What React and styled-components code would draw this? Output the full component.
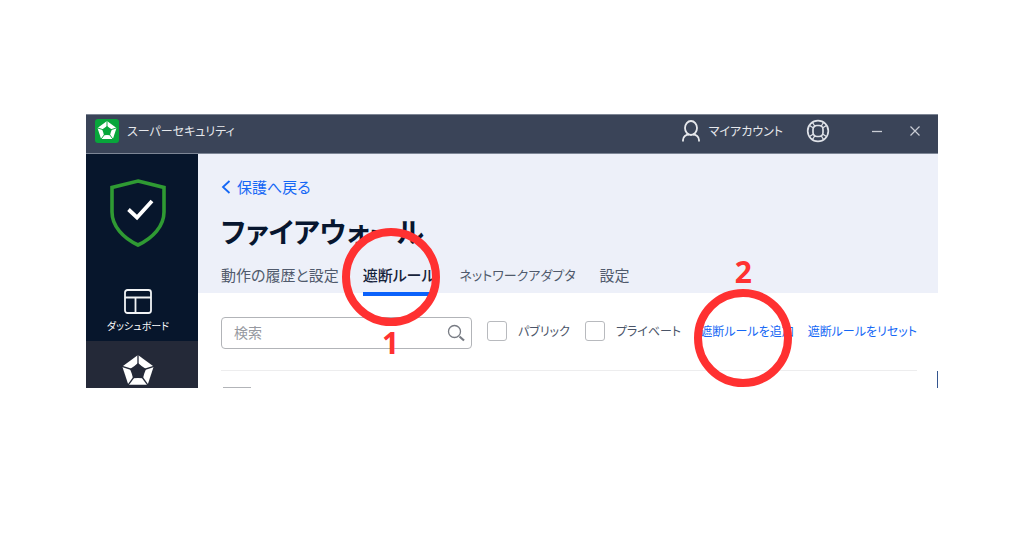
import React from "react";
import styled, { createGlobalStyle } from "styled-components";

const GlobalStyle = createGlobalStyle`
  *, *::before, *::after { box-sizing: border-box; }
  body {
    margin: 0;
    background: #fff;
    color: #4a5468;
    font-family: "Noto Sans CJK JP", sans-serif;
    font-feature-settings: "palt";
  }
  button, input { font: inherit; font-feature-settings: inherit; color: inherit; }
`;

const Page = styled.div`
  padding: 114px 86px;
`;

const Window = styled.div`
  display: flex;
  flex-direction: column;
  overflow: clip;
`;

const TitleBar = styled.header`
  display: flex;
  align-items: center;
  height: 40px;
  padding: 0 8px 6px 9px;
  border-top: 1px solid #7d8594;
  border-bottom: 1px solid #7d8696;
  background: #3a4458;
  color: #e6e8ec;
  font-size: 12px;
  line-height: 20px;
`;

const Brand = styled.div`
  display: flex;
  align-items: center;
  gap: 8px;
  margin-right: auto;
`;

const BarButton = styled.button`
  display: flex;
  align-items: center;
  justify-content: center;
  gap: 8px;
  height: 30px;
  min-width: ${(p) => p.$width || "auto"};
  margin-right: ${(p) => p.$after || "0"};
  padding: 0;
  border: 0;
  background: none;
`;

const Body = styled.div`
  display: flex;
`;

const Sidebar = styled.nav`
  display: flex;
  flex-direction: column;
  flex: none;
  width: 112px;
  background: #07162c;
  color: #fff;
`;

const Status = styled.div`
  display: flex;
  justify-content: center;
  height: 127px;
  padding: 24px 8px 0 0;
`;

const NavItem = styled.a`
  display: flex;
  flex-direction: column;
  align-items: center;
  gap: 3px;
  height: ${(p) => (p.$active ? "47px" : "60px")};
  padding: ${(p) => (p.$active ? "14px" : "8px")} 8px 0 0;
  overflow: hidden;
  background: ${(p) => (p.$active ? "#242938" : "transparent")};
  color: inherit;
  font-size: 10px;
  line-height: 18px;
  text-decoration: none;
`;

const Main = styled.main`
  display: flex;
  flex-direction: column;
  flex: 1;
  min-width: 0;
`;

const Heading = styled.div`
  height: 139px;
  padding: 22px 23px 0;
  background: #edf0f9;
`;

const BackLink = styled.a`
  display: inline-flex;
  align-items: center;
  gap: 6px;
  color: #1467f5;
  font-size: 15px;
  line-height: 22px;
  text-decoration: none;
  vertical-align: top;
`;

const Title = styled.h1`
  margin: 9px 0 13px;
  color: #07162f;
  font-size: 28px;
  font-weight: 700;
  line-height: 44px;
`;

const Tabs = styled.div`
  display: flex;
  gap: 24px;
`;

const Tab = styled.button`
  position: relative;
  height: 30px;
  padding: 0 0 8px;
  border: 0;
  border-bottom: 4px solid ${(p) => (p.$active ? "#0b62fb" : "transparent")};
  background: none;
  color: ${(p) => (p.$active ? "#16233b" : "#505a6c")};
  font-size: ${(p) => (p.$compact ? "13px" : "15px")};
  font-weight: ${(p) => (p.$active ? 500 : 400)};
  line-height: 18px;
  white-space: nowrap;
`;

const Content = styled.div`
  flex: 1;
  padding: 24px 21px 0 23px;
`;

const Toolbar = styled.div`
  display: flex;
  align-items: center;
  gap: 15px;
  padding-bottom: 21px;
  border-bottom: 1px solid #ededee;
  font-size: 12px;
  line-height: 20px;
  white-space: nowrap;
`;

const SearchBox = styled.label`
  display: flex;
  align-items: center;
  flex: 0 1 251px;
  min-width: 0;
  height: 32px;
  padding: 0 6px 0 12px;
  border: 1px solid #b2b4b8;
  border-radius: 4px;
`;

const SearchInput = styled.input`
  flex: 1;
  min-width: 0;
  padding: 0 0 3px;
  border: 0;
  outline: 0;
  background: none;
  font-size: 14px;
  &::placeholder { color: #9699a0; opacity: 1; }
`;

const CheckLabel = styled.label`
  display: flex;
  align-items: center;
  gap: 11px;
  padding-bottom: 4px;
`;

const Checkbox = styled.input.attrs({ type: "checkbox" })`
  appearance: none;
  width: 20px;
  height: 20px;
  margin: 0;
  border: 1px solid #b8babe;
  border-radius: 3px;
  background: #fff;
`;

const Actions = styled.div`
  display: flex;
  gap: 14px;
  margin-left: auto;
`;

const ActionLink = styled.a`
  position: relative;
  padding-bottom: 4px;
  color: #1467f5;
  text-decoration: none;
`;

const ListStart = styled.div`
  display: flex;
  align-items: flex-end;
  justify-content: space-between;
  height: 17px;
  margin-right: -21px;
`;

const ListBox = styled.span`
  width: 28px;
  height: 1px;
  margin-left: 2px;
  background: #b2b4b8;
`;

const ScrollEdge = styled.span`
  width: 1px;
  height: 17px;
  background: #34558f;
`;

const Ring = styled.span`
  position: absolute;
  z-index: 1;
  top: ${(p) => p.$y}px;
  left: ${(p) => p.$x}px;
  width: 98px;
  height: 98px;
  margin: -49px;
  border: 8px solid #ff3131;
  border-radius: 50%;
  pointer-events: none;
`;

const StepNumber = styled.span`
  position: absolute;
  ${(p) => (p.$below ? "top: 90px" : "bottom: 90px")};
  left: 0;
  right: 0;
  color: #ff3131;
  font-family: "Open Sans", sans-serif;
  font-size: 30px;
  font-weight: 700;
  line-height: 34px;
  text-align: center;
`;

function Pentagon({ size, color, cut, gap }) {
  const pt = (r, deg) => {
    const a = ((deg - 90) * Math.PI) / 180;
    return `${(r * Math.cos(a)).toFixed(2)},${(r * Math.sin(a)).toFixed(2)}`;
  };
  const steps = [0, 72, 144, 216, 288];
  return (
    <svg width={size} height={size} viewBox="-16 -16 32 32" aria-hidden="true">
      <polygon points={steps.map((d) => pt(16, d)).join(" ")} fill={color} />
      <polygon
        points={steps.map((d) => `${pt(8.2, d)} ${pt(6.4, d + 36)}`).join(" ")}
        fill={cut}
      />
      {steps.map((d) => {
        const [x, y] = pt(17, d).split(",");
        return <line key={d} x1="0" y1="0" x2={x} y2={y} stroke={cut} strokeWidth={gap} />;
      })}
    </svg>
  );
}

function Logo() {
  return (
    <svg width="24" height="24" viewBox="0 0 24 24" aria-hidden="true">
      <rect width="24" height="24" rx="3" fill="#08a63b" />
      <svg x="2" y="2" width="20" height="20" viewBox="0 0 20 20">
        <Pentagon size={20} color="#fff" cut="#08a63b" gap={1.5} />
      </svg>
    </svg>
  );
}

export default function App() {
  return (
    <Page>
      <GlobalStyle />
      <Window>
        <TitleBar>
          <Brand>
            <Logo />
            <span>スーパーセキュリティ</span>
          </Brand>
          <BarButton $after="23px">
            <svg width="20" height="24" viewBox="0 0 20 24" fill="none" stroke="#e6e8ec" strokeWidth="1.8">
              <ellipse cx="10" cy="9" rx="6" ry="7" />
              <path d="M2 22.500V21C2 17.500 5 15.500 8 15.500M18 22.500V21C18 17.500 15 15.500 12 15.500" />
            </svg>
            マイアカウント
          </BarButton>
          <BarButton aria-label="サポート" $after="32px">
            <svg width="24" height="24" viewBox="0 0 24 24" fill="none" stroke="#dfe2e8" strokeWidth="1.700">
              <circle cx="12" cy="12" r="10.300" />
              <rect x="7" y="6.500" width="10" height="11" rx="4" />
              <path d="M6.500 3.500 9 7.500M3.500 6.500 7.500 9M17.500 3.500 15 7.500M20.500 6.500 16.500 9M6.500 20.500 9 16.500M3.500 17.500 7.500 15M17.500 20.500 15 16.500M20.500 17.500 16.500 15" strokeWidth="1.300" />
            </svg>
          </BarButton>
          <BarButton aria-label="最小化" $width="30px" $after="8px">
            <svg width="12" height="12" viewBox="0 0 12 12" stroke="#c9cdd5" strokeWidth="1.300">
              <path d="M1 6.500H11" />
            </svg>
          </BarButton>
          <BarButton aria-label="閉じる" $width="30px">
            <svg width="12" height="12" viewBox="0 0 12 12" stroke="#c9cdd5" strokeWidth="1.200">
              <path d="M1.500 1.500 10.500 10.500M10.500 1.500 1.500 10.500" />
            </svg>
          </BarButton>
        </TitleBar>
        <Body>
          <Sidebar>
            <Status>
              <svg width="58" height="70" viewBox="0 0 58 70" fill="none" aria-hidden="true">
                <path d="M29 3 55 9.500V34C55 48 44 60 29 67 14 60 3 48 3 34V9.500Z" stroke="#2f9a33" strokeWidth="3.600" />
                <path d="M19.500 31.500 28 39.500 43 23" stroke="#fff" strokeWidth="3.800" />
              </svg>
            </Status>
            <NavItem href="#dashboard">
              <svg width="28" height="25" viewBox="0 0 28 25" fill="none" stroke="#f1f3f5" strokeWidth="1.800" aria-hidden="true">
                <rect x="1" y="1" width="26" height="23" rx="2.500" />
                <path d="M1 8.500H27M11.500 8.500V24" />
              </svg>
              ダッシュボード
            </NavItem>
            <NavItem href="#protection" aria-label="保護" $active>
              <Pentagon size={34} color="#fff" cut="#242938" gap={1.3} />
            </NavItem>
          </Sidebar>
          <Main>
            <Heading>
              <BackLink href="#protection">
                <svg width="10" height="14" viewBox="0 0 10 14" fill="none" stroke="#1467f5" strokeWidth="1.800" aria-hidden="true">
                  <path d="M8.500 1 2 7 8.500 13" />
                </svg>
                保護へ戻る
              </BackLink>
              <Title>ファイアウォール</Title>
              <Tabs role="tablist">
                <Tab role="tab">動作の履歴と設定</Tab>
                <Tab role="tab" aria-selected="true" $active>
                  遮断ルール
                  <Ring $x={28} $y={11}>
                    <StepNumber $below>1</StepNumber>
                  </Ring>
                </Tab>
                <Tab role="tab" $compact>ネットワークアダプタ</Tab>
                <Tab role="tab">設定</Tab>
              </Tabs>
            </Heading>
            <Content>
              <Toolbar>
                <SearchBox>
                  <SearchInput type="text" placeholder="検索" aria-label="検索" />
                  <svg width="18" height="18" viewBox="0 0 18 18" fill="none" stroke="#777b83" aria-hidden="true">
                    <circle cx="7.500" cy="7.500" r="6" strokeWidth="1.300" />
                    <path d="M12.500 12.500 17 16.500" strokeWidth="2.200" />
                  </svg>
                </SearchBox>
                <CheckLabel>
                  <Checkbox />
                  パブリック
                </CheckLabel>
                <CheckLabel>
                  <Checkbox />
                  プライベート
                </CheckLabel>
                <Actions>
                  <ActionLink href="#add">
                    遮断ルールを追加
                    <Ring $x={43} $y={17}>
                      <StepNumber>2</StepNumber>
                    </Ring>
                  </ActionLink>
                  <ActionLink href="#reset">遮断ルールをリセット</ActionLink>
                </Actions>
              </Toolbar>
              <ListStart>
                <ListBox />
                <ScrollEdge />
              </ListStart>
            </Content>
          </Main>
        </Body>
      </Window>
    </Page>
  );
}
